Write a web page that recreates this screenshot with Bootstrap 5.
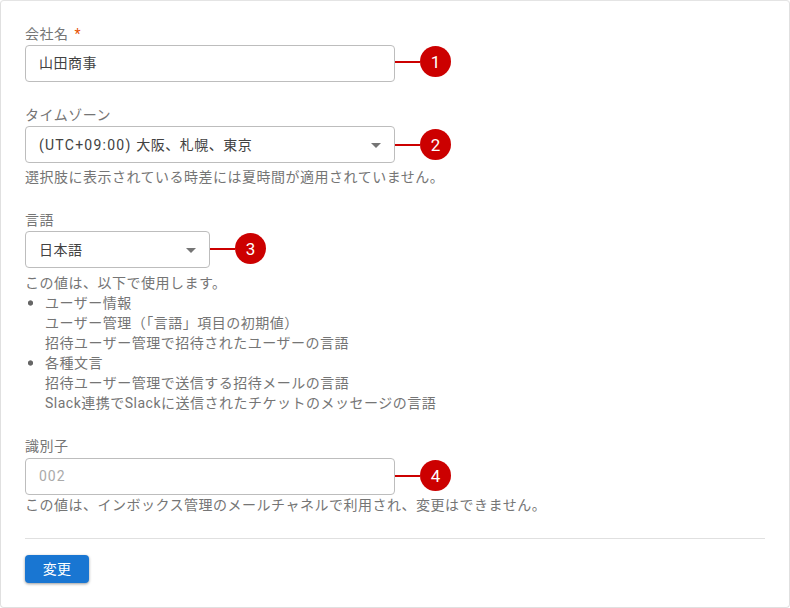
<!DOCTYPE html>
<html lang="ja">
<head>
<meta charset="utf-8">
<title>設定</title>
<link href="https://cdn.jsdelivr.net/npm/bootstrap@5.3.0/dist/css/bootstrap.min.css" rel="stylesheet">
<style>
html,body{height:100%;}
body{background:#fff;font-family:Roboto,"Noto Sans CJK JP",sans-serif;font-size:14px;letter-spacing:.5px;color:#757575;line-height:20px;}
.panel{width:790px;height:608px;border:1px solid #e0e0e0;border-top-color:#e4e4e4;border-radius:4px;padding:23px 24px 0;}
.fgroup{margin-bottom:23px;}
.flabel{display:block;line-height:20px;margin-bottom:1px;color:#757575;}
.flabel.roomy{margin-bottom:2px;}
.req{color:#e65100;margin-left:6px;}
.fbox{height:37px;border:1px solid #bdbdbd;border-radius:4px;background:#fff;padding:0 13px;font-size:14px;line-height:34px;color:#424242;flex:none;}
.fbox.wide{width:370px;}
.fbox.narrow{width:185px;}
.fbox.off{color:#aaa;}
.spaced{letter-spacing:1.25px;}
.spaced-num{letter-spacing:1px;}
.caret{width:0;height:0;border-left:5px solid transparent;border-right:5px solid transparent;border-top:5px solid #757575;margin-top:2px;}
.lead-line{width:25px;height:2px;background:#c00;flex:none;}
.num{width:31px;height:31px;border-radius:50%;background:#c00;color:#fff;font-size:17px;letter-spacing:0;flex:none;}
.lift-2{margin-bottom:4px;}
.lift-1{margin-bottom:2px;}
.helpline{margin:0;line-height:20px;}
.helpline.close{margin-top:4px;}
.helpline.far{margin-top:5px;}
.blist{margin:0;padding:0;list-style:none;}
.blist li{padding-left:20px;background:radial-gradient(circle 3px at 5.5px 10px,#666 75%,transparent) no-repeat;}
.rule{margin:0;border:0;border-top:1px solid #e0e0e0;opacity:1;}
.go{width:64px;height:28px;padding:0;background:#1976d2;border:0;border-radius:4px;color:#fff;font-size:14px;line-height:28px;letter-spacing:.25px;box-shadow:0 1px 3px rgba(0,0,0,.4);}
</style>
</head>
<body>
<form class="panel bg-white" onsubmit="return false">
  <div class="fgroup">
    <label class="flabel">会社名<span class="req">*</span></label>
    <div class="d-flex align-items-center">
      <div class="fbox wide">山田商事</div>
      <div class="d-flex align-items-center lift-2">
        <div class="lead-line"></div>
        <div class="num d-flex align-items-center justify-content-center">1</div>
      </div>
    </div>
  </div>
  <div class="fgroup">
    <label class="flabel">タイムゾーン</label>
    <div class="d-flex align-items-center">
      <div class="fbox wide d-flex align-items-center justify-content-between"><span><span class="spaced">(UTC+09:00) </span>大阪、札幌、東京</span><span class="caret"></span></div>
      <div class="d-flex align-items-center">
        <div class="lead-line"></div>
        <div class="num d-flex align-items-center justify-content-center">2</div>
      </div>
    </div>
    <p class="helpline close">選択肢に表示されている時差には夏時間が適用されていません。</p>
  </div>
  <div class="fgroup">
    <label class="flabel">言語</label>
    <div class="d-flex align-items-center">
      <div class="fbox narrow d-flex align-items-center justify-content-between"><span>日本語</span><span class="caret"></span></div>
      <div class="d-flex align-items-center lift-1">
        <div class="lead-line"></div>
        <div class="num d-flex align-items-center justify-content-center">3</div>
      </div>
    </div>
    <p class="helpline far">この値は、以下で使用します。</p>
    <ul class="blist">
      <li>ユーザー情報<br>ユーザー管理（「言語」項目の初期値）<br>招待ユーザー管理で招待されたユーザーの言語</li>
      <li>各種文言<br>招待ユーザー管理で送信する招待メールの言語<br>Slack連携でSlackに送信されたチケットのメッセージの言語</li>
    </ul>
  </div>
  <div class="fgroup">
    <label class="flabel roomy">識別子</label>
    <div class="d-flex align-items-center">
      <div class="fbox wide off spaced-num">002</div>
      <div class="d-flex align-items-center lift-1">
        <div class="lead-line"></div>
        <div class="num d-flex align-items-center justify-content-center">4</div>
      </div>
    </div>
    <p class="helpline">この値は、インボックス管理のメールチャネルで利用され、変更はできません。</p>
  </div>
  <hr class="rule">
  <button class="btn go mt-3" type="button">変更</button>
</form>
<script src="https://cdn.jsdelivr.net/npm/bootstrap@5.3.0/dist/js/bootstrap.bundle.min.js"></script>
</body>
</html>
